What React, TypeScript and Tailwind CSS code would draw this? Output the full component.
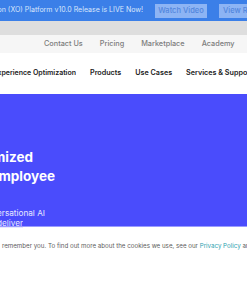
const font = { fontFamily: 'Inter, "Liberation Sans", sans-serif' };

function ClipRight({ width, children, className = '' }: { width: number; children: React.ReactNode; className?: string }) {
  // text anchored on its right edge, the start runs off the left of the viewport
  return (
    <div className={`flex justify-end overflow-hidden shrink-0 ${className}`} style={{ width }}>
      <span className="whitespace-nowrap">{children}</span>
    </div>
  );
}

export default function App() {
  const topLinks = ['Contact Us', 'Pricing', 'Marketplace', 'Academy'];
  const mainLinks = ['Products', 'Use Cases', 'Services & Support'];

  return (
    <div className="w-[247px] h-[296px] overflow-hidden bg-white" style={font}>
      {/* release banner */}
      <div className="h-[21px] bg-[#3b7fe8] flex items-center whitespace-nowrap">
        <ClipRight width={143} className="text-[7px] text-[#d9e6fc]">
          Kore.ai Experience Optimization (XO) Platform v10.0 Release is LIVE Now!
        </ClipRight>
        <button className="ml-[12px] h-[14px] w-[52px] shrink-0 bg-[#8db4f4] text-[#5286dd] text-[7.5px] font-medium">
          Watch Video
        </button>
        <button className="ml-[12px] h-[14px] w-[56px] shrink-0 bg-[#8db4f4] text-[#5286dd] text-[7.5px] font-medium text-left pl-[4px]">
          View Release
        </button>
      </div>

      <div className="h-[14px] bg-[#dedede]" />

      {/* secondary links */}
      <div className="h-[18px] bg-[#f6f6f6] flex items-center pl-[44px] gap-[17px] whitespace-nowrap">
        {topLinks.map((l) => (
          <span key={l} className="text-[7.3px] font-medium text-[#7d7d7d]">{l}</span>
        ))}
      </div>

      {/* main navigation */}
      <div className="h-[41px] bg-white flex items-center whitespace-nowrap">
        <ClipRight width={76} className="text-[7px] font-semibold text-[#222]">
          Experience Optimization
        </ClipRight>
        {mainLinks.map((l) => (
          <span key={l} className="ml-[14px] text-[7.2px] font-semibold text-[#222] shrink-0">{l}</span>
        ))}
      </div>

      {/* hero */}
      <div className="h-[133px] bg-[#4a4cfc] border-b border-[#9a9bff] flex flex-col">
        <div className="mt-[54px] text-white font-bold text-[13.5px] leading-[19px]">
          <ClipRight width={33}>Customized</ClipRight>
          <ClipRight width={55}>AI Employee</ClipRight>
        </div>
        <div className="mt-[22px] text-[#e8e8ff] text-[8.2px] leading-[10px]">
          <ClipRight width={45}>Conversational AI</ClipRight>
          <ClipRight width={23}><span className="underline">deliver</span></ClipRight>
        </div>
      </div>

      {/* cookie notice */}
      <div className="pt-[14px] pl-[2px] text-[6.2px] text-[#5d5d5d] whitespace-nowrap">
        remember you. To find out more about the cookies we use, see our{' '}
        <span className="text-[#2a9fb0]">Privacy Policy</span> and Terms of Use.
      </div>
    </div>
  );
}
